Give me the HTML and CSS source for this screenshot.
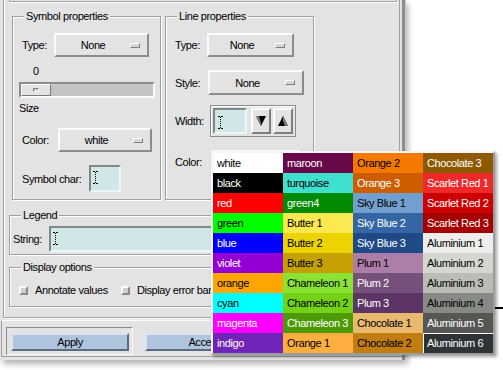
FILE: index.html
```html
<!DOCTYPE html>
<html lang="en">
<head>
  <meta charset="UTF-8" />
  <meta name="viewport" content="width=device-width, initial-scale=1.0" />
  <title>Element style</title>
  <link rel="stylesheet" href="styles.css">
</head>
<body>
  <div class="dialog">
    <div class="main">
      <div class="top-cut"></div>

      <div class="props">
        <!-- Symbol properties -->
        <fieldset class="group symbol">
          <legend>Symbol properties</legend>
          <div class="row row-type">
            <span class="lbl lbl-type">Type:</span>
            <button class="optmenu sym-type"><span>None</span><i class="ind"></i></button>
          </div>
          <div class="scale-value">0</div>
          <div class="scale"><div class="thumb"><i></i></div></div>
          <div class="scale-label">Size</div>
          <div class="row row-color">
            <span class="lbl lbl-color">Color:</span>
            <button class="optmenu sym-color"><span>white</span><i class="ind"></i></button>
          </div>
          <div class="row row-char">
            <span class="lbl lbl-char">Symbol char:</span>
            <div class="entry char-entry">
              <svg class="ibeam" width="5" height="13" viewBox="0 0 5 13"><path d="M0 .5h2M3 .5h2M0 12.5h2M3 12.5h2" stroke="#000"/><path d="M2.5 1v11" stroke="#000" stroke-dasharray="1 1"/></svg>
            </div>
          </div>
        </fieldset>

        <!-- Line properties -->
        <fieldset class="group line">
          <legend>Line properties</legend>
          <div class="row row-type">
            <span class="lbl lbl-ltype">Type:</span>
            <button class="optmenu line-type"><span>None</span><i class="ind"></i></button>
          </div>
          <div class="row row-style">
            <span class="lbl lbl-style">Style:</span>
            <button class="optmenu line-style"><span>None</span><i class="ind"></i></button>
          </div>
          <div class="row row-width">
            <span class="lbl lbl-width">Width:</span>
            <div class="spin">
              <div class="entry width-entry">
                <svg class="ibeam" width="5" height="13" viewBox="0 0 5 13"><path d="M0 .5h2M3 .5h2M0 12.5h2M3 12.5h2" stroke="#000"/><path d="M2.5 1v11" stroke="#000" stroke-dasharray="1 1"/></svg>
              </div>
              <button class="arrow">
                <svg width="10" height="10" viewBox="0 0 10 10"><polygon points="0,0 10,0 5,10" fill="#000"/><polygon points="0,0 3,0 5,7 5,10" fill="#7a7a7a"/></svg>
              </button>
              <button class="arrow">
                <svg width="10" height="10" viewBox="0 0 10 10"><polygon points="5,0 10,10 0,10" fill="#000"/><polygon points="5,0 10,10 7,10 5,5" fill="#7a7a7a"/></svg>
              </button>
            </div>
          </div>
          <div class="row row-lcolor">
            <span class="lbl lbl-lcolor">Color:</span>
            <!-- hidden under the open colour list -->
            <button class="optmenu line-color"><span></span><i class="ind"></i></button>
          </div>
        </fieldset>
      </div>

      <!-- Legend -->
      <fieldset class="group legend-box">
        <legend>Legend</legend>
        <div class="row row-string">
          <span class="lbl lbl-string">String:</span>
          <div class="entry string-entry">
            <svg class="ibeam" width="5" height="13" viewBox="0 0 5 13"><path d="M0 .5h2M3 .5h2M0 12.5h2M3 12.5h2" stroke="#000"/><path d="M2.5 1v11" stroke="#000" stroke-dasharray="1 1"/></svg>
          </div>
        </div>
      </fieldset>

      <!-- Display options -->
      <fieldset class="group options">
        <legend>Display options</legend>
        <div class="row row-checks">
          <i class="check"></i><span>Annotate values</span>
          <i class="check check-2"></i><span>Display error bars</span>
        </div>
      </fieldset>
    </div>

    <div class="buttons">
      <div class="default-ring"><button class="btn">Apply</button></div>
      <button class="btn btn-accept">Accept</button>
    </div>
  </div>

  <div class="edge-line"></div>

  <!-- Colour chooser popup -->
  <div class="palette">
    <div class="swatch light" style="background:#ffffff">white</div>
    <div class="swatch dark" style="background:#000000">black</div>
    <div class="swatch dark" style="background:#ff0000">red</div>
    <div class="swatch light" style="background:#00ff00">green</div>
    <div class="swatch dark" style="background:#0000ff">blue</div>
    <div class="swatch dark" style="background:#9400d3">violet</div>
    <div class="swatch light" style="background:#ffa500">orange</div>
    <div class="swatch light" style="background:#00ffff">cyan</div>
    <div class="swatch dark" style="background:#ff00ff">magenta</div>
    <div class="swatch dark" style="background:#7024b8">indigo</div>

    <div class="swatch dark" style="background:#680849">maroon</div>
    <div class="swatch light" style="background:#40e0d0">turquoise</div>
    <div class="swatch dark" style="background:#008b00">green4</div>
    <div class="swatch light" style="background:#fce94f">Butter 1</div>
    <div class="swatch light" style="background:#edd400">Butter 2</div>
    <div class="swatch light" style="background:#c4a000">Butter 3</div>
    <div class="swatch light" style="background:#8ae234">Chameleon 1</div>
    <div class="swatch light" style="background:#73d216">Chameleon 2</div>
    <div class="swatch dark" style="background:#4e9a06">Chameleon 3</div>
    <div class="swatch light" style="background:#fcaf3e">Orange 1</div>

    <div class="swatch light" style="background:#f57900">Orange 2</div>
    <div class="swatch dark" style="background:#ce5c00">Orange 3</div>
    <div class="swatch light" style="background:#729fcf">Sky Blue 1</div>
    <div class="swatch dark" style="background:#3465a4">Sky Blue 2</div>
    <div class="swatch dark" style="background:#204a87">Sky Blue 3</div>
    <div class="swatch light" style="background:#ad7fa8">Plum 1</div>
    <div class="swatch dark" style="background:#75507b">Plum 2</div>
    <div class="swatch dark" style="background:#5c3566">Plum 3</div>
    <div class="swatch light" style="background:#e9b96e">Chocolate 1</div>
    <div class="swatch light" style="background:#c17d11">Chocolate 2</div>

    <div class="swatch dark" style="background:#8f5902">Chocolate 3</div>
    <div class="swatch dark" style="background:#ef2929">Scarlet Red 1</div>
    <div class="swatch dark" style="background:#cc0000">Scarlet Red 2</div>
    <div class="swatch dark" style="background:#a40000">Scarlet Red 3</div>
    <div class="swatch light" style="background:#eeeeec">Aluminium 1</div>
    <div class="swatch light" style="background:#d3d7cf">Aluminium 2</div>
    <div class="swatch light" style="background:#babdb6">Aluminium 3</div>
    <div class="swatch light" style="background:#888a85">Aluminium 4</div>
    <div class="swatch dark" style="background:#555753">Aluminium 5</div>
    <div class="swatch dark selected" style="background:#2e3436">Aluminium 6</div>
  </div>
</body>
</html>
```

FILE: styles.css
```css
body {
  margin: 0;
  width: 503px;
  height: 370px;
  overflow: hidden;
  position: relative;
  background: #fff;
  font-family: "Liberation Sans", Arial, sans-serif;
  font-size: 11px;
  letter-spacing: -0.4px;
  color: #000;
}

button {
  font: inherit;
  letter-spacing: inherit;
  color: #000;
  padding: 0;
  margin: 0;
}

.dialog {
  width: 402px;
  height: 360px;
  background: #e3e3e3;
  border-right: 3px solid #8e8e8e;
  box-shadow: 1px 0 0 #c8c8c8, 3px 4px 6px rgba(0, 0, 0, 0.3);
  display: flex;
  flex-direction: column;
}

/* etched frames */
.main {
  margin-left: 3px;
  width: 397px;
  height: 318px;
  box-sizing: border-box;
  border: 1px solid #a0a0a0;
  border-top: 0;
  box-shadow: inset 1px 0 0 #fff, 0 1px 0 #fff;
}

.top-cut {
  margin-left: 5px;
  width: 388px;
  height: 2px;
  box-sizing: border-box;
  border: 1px solid #a0a0a0;
  border-top: 0;
  box-shadow: 1px 1px 0 #fff;
}

.props {
  display: flex;
  gap: 4px;
  margin: 8px 0 0 8px;
}

.group {
  margin: 0;
  padding: 0;
  min-width: 0;
  box-sizing: border-box;
  border: 1px solid #a0a0a0;
  box-shadow: inset 1px 1px 0 #fff, 1px 1px 0 #fff;
}

.group legend {
  margin-left: 11px;
  padding: 0 2px;
  line-height: 13px;
  background: #e3e3e3;
}

.symbol,
.line {
  width: 149px;
  height: 190px;
}

.row {
  display: flex;
  align-items: center;
}

.lbl {
  flex: none;
}

/* option menus */
.optmenu {
  display: flex;
  align-items: center;
  box-sizing: border-box;
  height: 24px;
  background: #e3e3e3;
  border: 2px solid;
  border-color: #fbfbfb #8c8c8c #8c8c8c #fbfbfb;
}

.optmenu span {
  flex: 1;
  text-align: center;
}

.ind {
  width: 10px;
  height: 5px;
  margin-right: 7px;
  box-sizing: border-box;
  background: #d6d6d6;
  border: 1px solid;
  border-color: #fff #7e7e7e #7e7e7e #fff;
}

/* symbol frame */
.symbol .row {
  padding-left: 9px;
}

.symbol .row-type {
  margin-top: 10px;
}

.lbl-type { width: 32px; }
.sym-type { width: 95px; }

.scale-value {
  margin-top: 8px;
  padding-left: 20px;
  line-height: 13px;
}

.scale {
  margin: 4px 0 0 6px;
  width: 136px;
  height: 16px;
  box-sizing: border-box;
  background: #c4c4c4;
  border: 2px solid;
  border-color: #8c8c8c #fbfbfb #fbfbfb #8c8c8c;
}

.thumb {
  width: 30px;
  height: 12px;
  box-sizing: border-box;
  background: #e3e3e3;
  border: 1px solid;
  border-color: #fff #7a7a7a #7a7a7a #fff;
  display: flex;
  align-items: center;
  justify-content: center;
}

.thumb i {
  width: 6px;
  height: 4px;
  box-sizing: border-box;
  background: #d0d0d0;
  border: 1px solid;
  border-color: #7a7a7a #fff #fff #7a7a7a;
}

.scale-label {
  margin-top: 4px;
  padding-left: 6px;
  line-height: 13px;
}

.symbol .row-color {
  margin-top: 13px;
}

.lbl-color { width: 36px; }
.sym-color { width: 94px; }

.symbol .row-char {
  margin-top: 13px;
}

.lbl-char { width: 67px; }

/* entries */
.entry {
  box-sizing: border-box;
  background: #d1e7e7;
  border: 2px solid;
  border-color: #7d8989 #eef7f7 #eef7f7 #7d8989;
  padding: 4px 0 0 2px;
}

.ibeam {
  display: block;
}

.char-entry {
  width: 32px;
  height: 27px;
}

/* line frame */
.line .row {
  padding-left: 9px;
}

.line .row-type {
  margin-top: 10px;
}

.lbl-ltype { width: 32px; }
.line-type { width: 87px; }

.row-style {
  margin-top: 13px;
}

.lbl-style { width: 33px; }
.line-style { width: 96px; height: 25px; }

.row-width {
  margin-top: 10px;
}

.lbl-width { width: 35px; }

.spin {
  display: flex;
  gap: 2px;
  padding: 2px;
  width: 86px;
  height: 32px;
  box-sizing: border-box;
  border: 1px solid #8c8c8c;
  box-shadow: inset 1px 1px 0 #fff;
}

.width-entry {
  width: 34px;
  height: 26px;
  margin-right: 2px;
  padding: 6px 0 0 3px;
}

.arrow {
  width: 20px;
  height: 26px;
  box-sizing: border-box;
  background: #e3e3e3;
  border: 2px solid;
  border-color: #fbfbfb #7e7e7e #7e7e7e #fbfbfb;
  display: flex;
  align-items: center;
  justify-content: center;
}

.arrow svg {
  display: block;
}

.row-lcolor {
  margin-top: 13px;
}

.lbl-lcolor { width: 37px; }
.line-color { width: 90px; height: 23px; }

/* legend frame */
.legend-box {
  margin: 9px 0 0 5px;
  width: 388px;
  height: 46px;
}

.row-string {
  margin-top: 4px;
  padding-left: 3px;
}

.lbl-string { width: 36px; }

.string-entry {
  flex: 1;
  height: 26px;
  margin-right: 6px;
}

/* display options */
.options {
  margin: 6px 0 0 5px;
  width: 388px;
  height: 46px;
}

.row-checks {
  margin-top: 9px;
  padding-left: 9px;
  height: 14px;
}

.check {
  width: 9px;
  height: 9px;
  margin-right: 7px;
  box-sizing: border-box;
  background: #cfcfcf;
  border: 2px solid;
  border-color: #fbfbfb #8a8a8a #8a8a8a #fbfbfb;
}

.check-2 {
  margin-left: 13px;
}

/* bottom buttons */
.buttons {
  display: flex;
  align-items: flex-start;
  margin: 2px 0 0 1px;
  padding: 6px 0 0 4px;
  height: 37px;
  box-sizing: border-box;
  border-top: 1px solid #fbfbfb;
  border-left: 1px solid #a0a0a0;
  border-bottom: 1px solid #a0a0a0;
}

.default-ring {
  padding: 5px 3px 3px 4px;
  border: 1px solid;
  border-color: #8c8c8c #fbfbfb #fbfbfb #8c8c8c;
}

.btn {
  width: 118px;
  height: 18px;
  box-sizing: border-box;
  background: #b0c4de;
  border: 2px solid;
  border-color: #dbe4f0 #5d6b80 #5d6b80 #dbe4f0;
  text-align: center;
  line-height: 14px;
}

.btn-accept {
  margin: 6px 0 0 12px;
}

/* window behind */
.edge-line {
  position: absolute;
  left: 486px;
  top: 307px;
  width: 17px;
  height: 2px;
  background: #000;
}

/* colour popup */
.palette {
  position: absolute;
  left: 211px;
  top: 151px;
  display: grid;
  grid-auto-flow: column;
  grid-template-rows: repeat(10, 20px);
  grid-template-columns: repeat(4, 70px);
  background: #fff;
  border: 2px solid;
  border-color: #f6f6f6 #9c9c9c #9c9c9c #f6f6f6;
  box-shadow: 2px 2px 3px rgba(0, 0, 0, 0.35);
}

.swatch {
  padding-left: 4px;
  line-height: 20px;
  white-space: nowrap;
  overflow: hidden;
}

.swatch.light { color: #000; }
.swatch.dark { color: #fff; }

.swatch.selected {
  box-shadow: inset 1px 1px 0 #fff;
}
```
